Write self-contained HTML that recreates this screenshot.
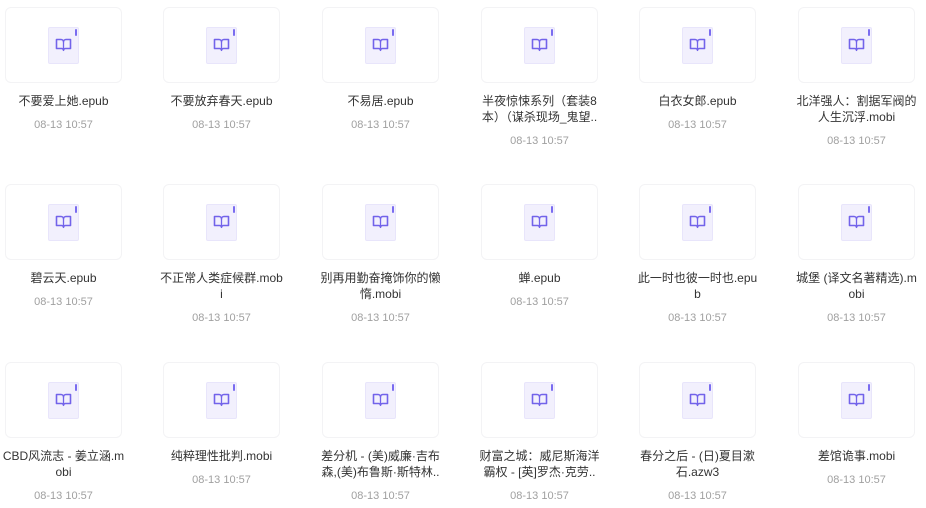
<!DOCTYPE html>
<html><head><meta charset="utf-8"><style>
body{margin:0;width:926px;height:508px;background:#fff;position:relative;overflow:hidden;font-family:"Liberation Sans","Noto Sans CJK SC",sans-serif}
.it{position:absolute;width:117px}
.card{width:115px;height:74px;border:1px solid #f3f3f5;border-radius:6px;position:relative;background:#fff}
.doc{position:absolute;left:42px;top:19px;width:29px;height:35px;background:#f2f0fd;border:1px solid #e8e5fb;border-radius:2px}
.bar{position:absolute;left:26px;top:1px;width:2px;height:7px;background:#7a6cf0;border-radius:1px}
.doc svg{position:absolute;left:6px;top:10px}
.t{margin-top:10px;text-align:center;font-size:12px;line-height:16px;color:#333;white-space:nowrap;margin-left:-10px;margin-right:-10px}
.d{margin-top:8px;text-align:center;font-size:11px;line-height:16px;color:#a0a0a0}
</style></head><body>
<script>
const cols=[5,163,322,481,639,798],rows=[7,184,362];
const items=[
["不要爱上她.epub"],["不要放弃春天.epub"],["不易居.epub"],["半夜惊悚系列（套装8","本）（谋杀现场_鬼望.."],["白衣女郎.epub"],["北洋强人：割据军阀的","人生沉浮.mobi"],
["碧云天.epub"],["不正常人类症候群.mob","i"],["别再用勤奋掩饰你的懒","惰.mobi"],["蝉.epub"],["此一时也彼一时也.epu","b"],["城堡 (译文名著精选).m","obi"],
["CBD风流志 - 姜立涵.m","obi"],["纯粹理性批判.mobi"],["差分机 - (美)威廉·吉布","森,(美)布鲁斯·斯特林.."],["财富之城：威尼斯海洋","霸权 - [英]罗杰·克劳.."],["春分之后 - (日)夏目漱","石.azw3"],["差馆诡事.mobi"]];
let h='';
items.forEach((t,i)=>{const L=cols[i%6],T=rows[Math.floor(i/6)];
h+=`<div class="it" style="left:${L}px;top:${T}px"><div class="card"><div class="doc"><div class="bar"></div><svg width="17" height="14" viewBox="0 0 17 14"><path d="M1.5 1.5h4.5c1.3 0 2.5 1 2.5 2.3 0-1.3 1.2-2.3 2.5-2.3h4.5v9h-5c-1 0-2 .8-2 1.8 0-1-1-1.8-2-1.8h-5z" fill="none" stroke="#7263ea" stroke-width="1.6" stroke-linejoin="round"/><path d="M8.5 3.8v8" stroke="#7263ea" stroke-width="1.3"/></svg></div></div><div class="t">${t.join('<br>')}</div><div class="d">08-13 10:57</div></div>`;});
document.body.innerHTML=h;
</script>
</body></html>
